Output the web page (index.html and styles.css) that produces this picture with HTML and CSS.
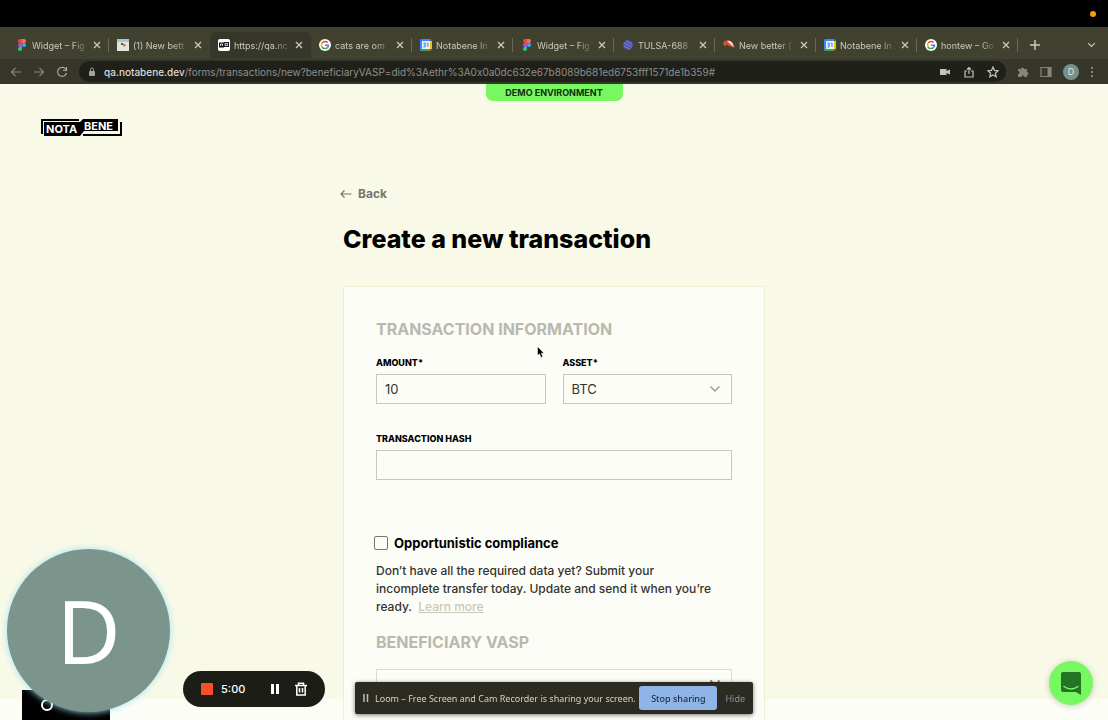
FILE: index.html
```html
<!DOCTYPE html>
<html lang="en">
    <head>
        <meta charset="utf-8">
        <title>Create a new transaction</title>
        <meta name="viewport" content="width=device-width, initial-scale=1">
        <link rel="stylesheet" href="styles.css">
    </head>
    <body>
        <svg class="defs" width="0" height="0" aria-hidden="true">
            <symbol id="figma" viewBox="0 0 12 12">
                <path fill="#e8492f" d="M4 0h2v4H4a2 2 0 0 1 0-4z"/>
                <path fill="#f4715a" d="M6 0h2a2 2 0 0 1 0 4H6z"/>
                <path fill="#9a55e0" d="M4 4h2v4H4a2 2 0 0 1 0-4z"/>
                <circle fill="#3aa9e8" cx="8" cy="6" r="2"/>
                <path fill="#2fc57c" d="M4 8h2v2a2 2 0 1 1-2-2z"/>
            </symbol>
            <symbol id="google" viewBox="0 0 12 12">
                <circle fill="#fff" cx="6" cy="6" r="6"/>
                <g fill="none" stroke-width="1.6">
                    <path stroke="#e24a3b" d="M3 4.2A3.5 3.5 0 0 1 8.6 3.6"/>
                    <path stroke="#e9b72c" d="M3 4.2a3.6 3.6 0 0 0 0 3.6"/>
                    <path stroke="#3fa457" d="M3 7.8a3.5 3.5 0 0 0 5.4.8"/>
                    <path stroke="#4a80e0" d="M6 6.2h3.4a3.5 3.5 0 0 1-1 2.4"/>
                </g>
            </symbol>
            <symbol id="calendar" viewBox="0 0 12 12">
                <path fill="#4285f4" d="M1 0h9v2H2v8H0V1z"/>
                <path fill="#1a66c8" d="M10 0h1l1 1v2h-2z"/>
                <path fill="#fbbc04" d="M10 2h2v8h-2z"/>
                <path fill="#34a853" d="M0 10h10v2H1l-1-1z"/>
                <path fill="#ea4335" d="M10 10h2l-2 2z"/>
                <path fill="#e9f1fb" d="M2 2h8v8H2z"/>
                <path fill="none" stroke="#4285f4" d="M3.4 4h1.8v4H3.4M3.6 6h1.6M6.8 4.4L8 4v4"/>
            </symbol>
            <symbol id="close" viewBox="0 0 8 8">
                <path fill="none" stroke="currentColor" stroke-width="1.3" d="M1 1l6 6M7 1L1 7"/>
            </symbol>
            <symbol id="chevron" viewBox="0 0 12 8">
                <path fill="none" stroke="currentColor" stroke-width="1.5" d="M1.5 1.5L6 6l4.500-4.500"/>
            </symbol>
        </svg>

        <div class="menubar"><span class="rec-dot"></span></div>

        <div class="tabs">
            <div class="tab"><svg class="favicon"><use href="#figma"/></svg><span class="tab-title">Widget – Fig</span><button class="tab-close" aria-label="Close tab"><svg><use href="#close"/></svg></button></div>
            <div class="tab no-line"><svg class="favicon" viewBox="0 0 12 12"><path fill="#dfe6dc" d="M0 0h12v12H0z"/><path fill="#9fc7d0" d="M0 0h12v3H0z"/><path fill="#c95b4b" d="M5 4l4 2-2 2z"/><path fill="#54604f" d="M4 4h2v2H4z"/></svg><span class="tab-title">(1) New bett</span><button class="tab-close" aria-label="Close tab"><svg><use href="#close"/></svg></button></div>
            <div class="tab active no-line"><svg class="favicon" viewBox="0 0 12 12"><rect width="12" height="12" rx="2" fill="#fff"/><path fill="#111" d="M1 3.500h5V3h5v5H6v.5H1z"/><path fill="none" stroke="#fff" stroke-width=".8" d="M2.500 7V5h2v2M7 4.400h2.500v2.200H7z"/></svg><span class="tab-title">https://qa.nc</span><button class="tab-close" aria-label="Close tab"><svg><use href="#close"/></svg></button></div>
            <div class="tab"><svg class="favicon"><use href="#google"/></svg><span class="tab-title">cats are om</span><button class="tab-close" aria-label="Close tab"><svg><use href="#close"/></svg></button></div>
            <div class="tab"><svg class="favicon"><use href="#calendar"/></svg><span class="tab-title">Notabene In</span><button class="tab-close" aria-label="Close tab"><svg><use href="#close"/></svg></button></div>
            <div class="tab"><svg class="favicon"><use href="#figma"/></svg><span class="tab-title">Widget – Fig</span><button class="tab-close" aria-label="Close tab"><svg><use href="#close"/></svg></button></div>
            <div class="tab"><svg class="favicon" viewBox="0 0 12 12"><circle cx="6" cy="6" r="5" fill="#5353a4"/><path stroke="#7d7de0" fill="none" d="M2 4l8 4M2 7l6 3M4 2l6 3"/></svg><span class="tab-title">TULSA-688</span><button class="tab-close" aria-label="Close tab"><svg><use href="#close"/></svg></button></div>
            <div class="tab"><svg class="favicon" viewBox="0 0 12 12"><path fill="#d94a3c" d="M0 4c2-4 8-3 9 0l3 5-6-2z"/><path fill="#f3e3c8" d="M4 2c3-1 5 1 6 3l1 3-4-3z"/><path fill="#e8a33c" d="M0 4l3 2-1 1z"/></svg><span class="tab-title">New better (</span><button class="tab-close" aria-label="Close tab"><svg><use href="#close"/></svg></button></div>
            <div class="tab"><svg class="favicon"><use href="#calendar"/></svg><span class="tab-title">Notabene In</span><button class="tab-close" aria-label="Close tab"><svg><use href="#close"/></svg></button></div>
            <div class="tab"><svg class="favicon"><use href="#google"/></svg><span class="tab-title">hontew – Go</span><button class="tab-close" aria-label="Close tab"><svg><use href="#close"/></svg></button></div>
            <button class="new-tab" aria-label="New tab"><svg width="10" height="10" viewBox="0 0 10 10"><path stroke="currentColor" stroke-width="1.500" d="M5 0v10M0 5h10"/></svg></button>
            <button class="tab-list" aria-label="Search tabs"><svg width="9" height="6"><use href="#chevron"/></svg></button>
        </div>

        <div class="toolbar">
            <button class="nav dim" aria-label="Back"><svg width="12" height="12" viewBox="0 0 12 12"><path d="M11 6H1.500M5.500 2l-4 4 4 4"/></svg></button>
            <button class="nav dim" aria-label="Forward"><svg width="12" height="12" viewBox="0 0 12 12"><path d="M1 6h9.500M6.500 2l4 4-4 4"/></svg></button>
            <button class="nav" aria-label="Reload"><svg width="12" height="12" viewBox="0 0 12 12"><path d="M10 3.500A4.500 4.500 0 1 0 10.500 7M10.500 1v3.500H7"/></svg></button>
            <div class="address">
                <svg class="lock" width="8" height="10" viewBox="0 0 8 10"><rect x="1" y="4" width="6" height="5" rx="1" fill="#a3a39d"/><path fill="none" stroke="#a3a39d" d="M2.500 4V2.500a1.500 1.500 0 0 1 3 0V4"/></svg>
                <span class="url"><b>qa.notabene.dev</b>/forms/transactions/new?beneficiaryVASP=did%3Aethr%3A0x0a0dc632e67b8089b681ed6753fff1571de1b359#</span>
                <button class="nav" aria-label="Camera"><svg width="12" height="12" viewBox="0 0 12 12"><path class="solid" d="M1 3h6.500v2L11 3.500v5L7.500 7v2H1z"/></svg></button>
                <button class="nav" aria-label="Share"><svg width="12" height="12" viewBox="0 0 12 12"><path d="M4 5H2v6h8V5H8M6 8V1.500M4 3.500l2-2 2 2"/></svg></button>
                <button class="nav" aria-label="Bookmark"><svg width="12" height="12" viewBox="0 0 12 12"><path d="M6 1l1.500 3.400 3.600.4-2.700 2.400.8 3.600L6 9l-3.200 1.800.8-3.600L.9 4.800l3.600-.4z"/></svg></button>
            </div>
            <button class="nav dim" aria-label="Extensions"><svg width="12" height="12" viewBox="0 0 12 12"><path class="solid" d="M1 3h3a1.500 1.500 0 1 1 3 0h3v3a1.500 1.500 0 1 1 0 3v2H7.500a1.500 1.500 0 0 0-3 0H1V8a1.500 1.500 0 0 0 0-3z"/></svg></button>
            <button class="nav dim" aria-label="Side panel"><svg width="12" height="12" viewBox="0 0 12 12"><path d="M1 1.500h10v9H1z"/><path class="solid" d="M7.500 1.500H11v9H7.500z"/></svg></button>
            <button class="profile">D</button>
            <button class="nav dim more" aria-label="Menu"><svg width="4" height="12" viewBox="0 0 4 12"><path class="solid" d="M1 1h2v2H1zM1 5h2v2H1zM1 9h2v2H1z"/></svg></button>
        </div>

        <div class="page">
            <div class="demo">DEMO ENVIRONMENT</div>
            <header class="header">
                <a href="#" aria-label="Notabene"><svg class="logo" width="82" height="20" viewBox="0 0 82 20">
                    <path d="M4 4h36l3-3h35v12H44l-4 5H4z"/>
                    <path fill="none" stroke="#000" stroke-width="2" d="M39 2H2v14M81 4v13H43"/>
                    <text x="6" y="15">NOTA</text>
                    <text x="44" y="12">BENE</text>
                </svg></a>
            </header>
            <main class="content">
                <a class="back" href="#"><svg width="12" height="10" viewBox="0 0 12 10"><path fill="none" stroke="currentColor" stroke-width="1.200" d="M11.500 5H1M4.500 1.500L1 5l3.500 3.500"/></svg>Back</a>
                <h1>Create a new transaction</h1>
                <form class="card">
                    <h2>TRANSACTION INFORMATION</h2>
                    <div class="row">
                        <div class="field">
                            <label for="amount">AMOUNT*</label>
                            <input id="amount" type="text" value="10">
                        </div>
                        <div class="field">
                            <label for="asset">ASSET*</label>
                            <div class="select">
                                <select id="asset"><option>BTC</option></select>
                                <svg width="12" height="8"><use href="#chevron"/></svg>
                            </div>
                        </div>
                    </div>
                    <div class="field hash">
                        <label for="hash">TRANSACTION HASH</label>
                        <input id="hash" type="text">
                    </div>
                    <div class="check">
                        <input id="compliance" type="checkbox">
                        <label for="compliance">Opportunistic compliance</label>
                    </div>
                    <p>Don’t have all the required data yet? Submit your<br>incomplete transfer today. Update and send it when you’re<br>ready. &nbsp;<a href="#">Learn more</a></p>
                    <h2>BENEFICIARY VASP</h2>
                    <div class="select vasp">
                        <select aria-label="Beneficiary VASP"><option></option></select>
                        <svg width="12" height="8"><use href="#chevron"/></svg>
                    </div>
                </form>
            </main>
        </div>

        <div class="footer-box"><span class="ring"></span></div>
        <div class="bubble">D</div>

        <div class="recorder">
            <button class="stop" aria-label="Stop recording"></button>
            <span class="time">5:00</span>
            <button aria-label="Pause"><svg width="10" height="12" viewBox="0 0 10 12"><path fill="#fff" d="M1 1h3v10H1zM6 1h3v10H6z"/></svg></button>
            <button aria-label="Delete"><svg width="14" height="14" viewBox="0 0 14 14"><path fill="none" stroke="#fff" stroke-width="1.500" d="M1 3.500h12M4.500 3.500V1.200h5v2.300M2.800 3.500V13h8.400V3.500M5.500 6v4.500M8.500 6v4.500"/></svg></button>
        </div>

        <div class="sharing">
            <svg width="6" height="8" viewBox="0 0 6 8"><path stroke="#bdbdb4" stroke-width="1.500" d="M1 0v8M4.500 0v8"/></svg>
            <span class="sharing-text">Loom – Free Screen and Cam Recorder is sharing your screen.</span>
            <button class="stop-sharing">Stop sharing</button>
            <button class="hide">Hide</button>
        </div>

        <button class="chat" aria-label="Open chat"><svg width="22" height="24" viewBox="0 0 22 24"><path fill="#227322" d="M3 1h16q2 0 2 2v21l-5-3H3q-2 0-2-2V3q0-2 2-2z"/><path fill="none" stroke="#78f878" stroke-width="1.500" stroke-linecap="round" d="M4 15.500q7 5 14 0"/></svg></button>

        <svg class="cursor" width="8" height="12" viewBox="0 0 8 12"><path stroke="#fff" stroke-width=".5" d="M.5.5v9l2-1.700L4 11.500l1.800-.8-1.500-3.500H7z"/></svg>
    </body>
</html>
```

FILE: styles.css
```css
* {
    box-sizing: border-box;
}

body {
    display: flex;
    flex-direction: column;
    height: 100vh;
    margin: 0;
    overflow: hidden;
    background: #fdfdf8;
    color: #000;
    font-family: Inter, "Liberation Sans", sans-serif;
    font-size: 12px;
}

button {
    display: flex;
    align-items: center;
    justify-content: center;
    margin: 0;
    padding: 0;
    border: 0;
    background: none;
    color: inherit;
    font: inherit;
}

.defs {
    position: absolute;
}

/* browser window */
.menubar {
    display: flex;
    flex: none;
    align-items: center;
    justify-content: flex-end;
    height: 27px;
    padding-right: 12px;
    background: #000;
}

.rec-dot {
    width: 6px;
    height: 6px;
    border-radius: 50%;
    background: #f79b0c;
}

.tabs {
    display: flex;
    flex: none;
    align-items: center;
    height: 32px;
    padding: 4px 8px 0;
    background: #41412f;
    color: #c9c9bf;
    font-size: 9px;
}

.tab {
    display: flex;
    flex: 0 1 101px;
    align-items: center;
    min-width: 0;
    height: 26px;
    padding: 0 8px;
    position: relative;
}

.tab::after {
    content: "";
    position: absolute;
    right: 0;
    width: 1px;
    height: 14px;
    background: #67675a;
}

.tab.no-line::after {
    display: none;
}

.tab.active {
    border-radius: 6px 6px 0 0;
    background: #36362a;
}

.favicon {
    flex: none;
    width: 12px;
    height: 12px;
}

.tab-title {
    flex: 1;
    margin: 0 4px;
    white-space: nowrap;
    -webkit-mask-image: linear-gradient(90deg, #000 70%, transparent);
    mask-image: linear-gradient(90deg, #000 70%, transparent);
}

.tab-close svg {
    width: 8px;
    height: 8px;
}

.new-tab {
    margin-left: 12px;
}

.tab-list {
    margin: 0 4px 0 auto;
}

.toolbar {
    display: flex;
    flex: none;
    align-items: center;
    gap: 11px;
    height: 25px;
    padding: 0 14px 0 10px;
    background: #36362a;
    color: #a9a9a0;
}

.nav svg {
    fill: none;
    stroke: currentColor;
    stroke-width: 1.2;
}

.nav .solid {
    fill: currentColor;
    stroke: none;
}

.nav.dim {
    color: #85857c;
}

.address {
    display: flex;
    flex: 1;
    align-items: center;
    gap: 12px;
    min-width: 0;
    height: 21px;
    padding: 0 7px 0 9px;
    border-radius: 10px;
    background: #20201b;
    color: #c4c4bb;
}

.lock {
    flex: none;
}

.url {
    flex: 1;
    margin-left: -4px;
    overflow: hidden;
    color: #8f8f88;
    font-size: 10px;
    white-space: nowrap;
}

.url b {
    color: #dcdcd4;
    font-weight: 500;
}

.profile {
    width: 16px;
    height: 16px;
    border-radius: 50%;
    background: #78908a;
    color: #dfe6e0;
    font-size: 9px;
}

/* page */
.page {
    flex: 1;
    min-height: 0;
    margin-bottom: 21px;
    background: #f9f9e8;
}

.demo {
    width: 137px;
    margin: 0 auto;
    border-radius: 0 0 7px 7px;
    background: #78f860;
    color: #0f3010;
    font-size: 9px;
    font-weight: 700;
    line-height: 17px;
    text-align: center;
}

.header {
    padding: 17px 40px 0;
}

.header a {
    display: block;
    width: 82px;
}

.logo {
    display: block;
}

.logo text {
    fill: #fff;
    font-size: 11px;
    font-weight: 700;
}

.content {
    width: 422px;
    max-width: 100%;
    margin: 48px auto 0;
}

.back {
    display: inline-flex;
    align-items: center;
    gap: 6px;
    margin-left: -3px;
    color: #77776e;
    font-weight: 700;
    line-height: 16px;
    text-decoration: none;
}

h1 {
    margin: 21px 0 31px;
    font-size: 25px;
    font-weight: 800;
    line-height: 32px;
}

.card {
    padding: 32px;
    border: 1px solid #efefd2;
    background: #fdfdf8;
}

h2 {
    margin: 0;
    color: #b9b9ae;
    font-size: 16px;
    font-weight: 700;
    line-height: 20px;
}

.row {
    display: grid;
    grid-template-columns: 1fr 1fr;
    gap: 17px;
    margin-top: 18px;
}

.field label {
    display: block;
    margin-bottom: 5px;
    font-size: 9px;
    font-weight: 800;
    line-height: 12px;
}

.field input,
.select select {
    display: block;
    width: 100%;
    height: 30px;
    padding: 0 8px;
    border: 1px solid #c9c9b8;
    border-radius: 0;
    background: transparent;
    color: #333330;
    font: inherit;
    font-size: 13px;
}

.select {
    display: grid;
    align-items: center;
    color: #9c9c92;
}

.select select {
    -webkit-appearance: none;
    appearance: none;
}

.select select,
.select svg {
    grid-area: 1 / 1;
}

.select svg {
    justify-self: end;
    margin-right: 11px;
    pointer-events: none;
}

.hash {
    margin-top: 29px;
}

.check {
    display: flex;
    align-items: center;
    gap: 6px;
    margin: 54px 0 10px -2px;
    font-size: 13px;
    font-weight: 700;
    line-height: 18px;
}

.check input {
    -webkit-appearance: none;
    appearance: none;
    width: 14px;
    height: 14px;
    margin: 0;
    border: 1px solid #77776e;
    border-radius: 2px;
}

.card p {
    margin: 0 0 16px;
    color: #33332f;
    font-weight: 500;
    line-height: 18px;
    white-space: nowrap;
}

.card p a {
    color: #c9c9b8;
}

.select.vasp {
    margin-top: 17px;
    color: #55554d;
}

.select.vasp select {
    height: 28px;
    border-color: #dcdccb;
}

/* recorder overlays */
.footer-box {
    position: fixed;
    bottom: 0;
    left: 22px;
    width: 88px;
    height: 30px;
    padding: 9px 19px;
    background: #000;
}

.ring {
    display: block;
    width: 12px;
    height: 12px;
    border: 2px solid #fff;
    border-radius: 50%;
}

.bubble {
    position: fixed;
    bottom: 8px;
    left: 7px;
    width: 163px;
    height: 163px;
    border-radius: 50%;
    background: #7b948c;
    box-shadow: 0 0 7px #9fe3ee;
    color: #fff;
    font-family: "Noto Sans", sans-serif;
    font-size: 88px;
    line-height: 163px;
    text-align: center;
}

.recorder {
    display: flex;
    position: fixed;
    bottom: 13px;
    left: 183px;
    align-items: center;
    width: 142px;
    height: 36px;
    padding: 0 17px 0 18px;
    border-radius: 18px;
    background: #1d1d17;
    color: #fff;
}

.stop {
    width: 12px;
    height: 12px;
    border-radius: 1px;
    background: #f8502c;
}

.time {
    flex: 1;
    margin-left: 8px;
    font-size: 11px;
    font-weight: 500;
}

.recorder svg {
    display: block;
    margin-left: 14px;
}

.sharing {
    display: flex;
    position: fixed;
    bottom: 6px;
    left: 50%;
    align-items: center;
    width: 398px;
    height: 32px;
    padding: 0 8px;
    border-radius: 2px;
    background: #2b2b22;
    box-shadow: 0 1px 4px #77776e;
    color: #d2d2c8;
    font-family: "Noto Sans", sans-serif;
    font-size: 9px;
    transform: translateX(-50%);
}

.sharing-text {
    flex: 1;
    margin-left: 6px;
    white-space: nowrap;
}

.stop-sharing {
    width: 78px;
    height: 24px;
    border-radius: 3px;
    background: #8fb4e8;
    color: #24303c;
    font-weight: 500;
}

.hide {
    margin-left: 8px;
    color: #8795a8;
}

.chat {
    position: fixed;
    right: 15px;
    bottom: 15px;
    width: 44px;
    height: 44px;
    border-radius: 50%;
    background: #78f860;
    box-shadow: 0 1px 6px #c9c9b8;
}

.cursor {
    position: fixed;
    top: 346px;
    left: 537px;
}
```
